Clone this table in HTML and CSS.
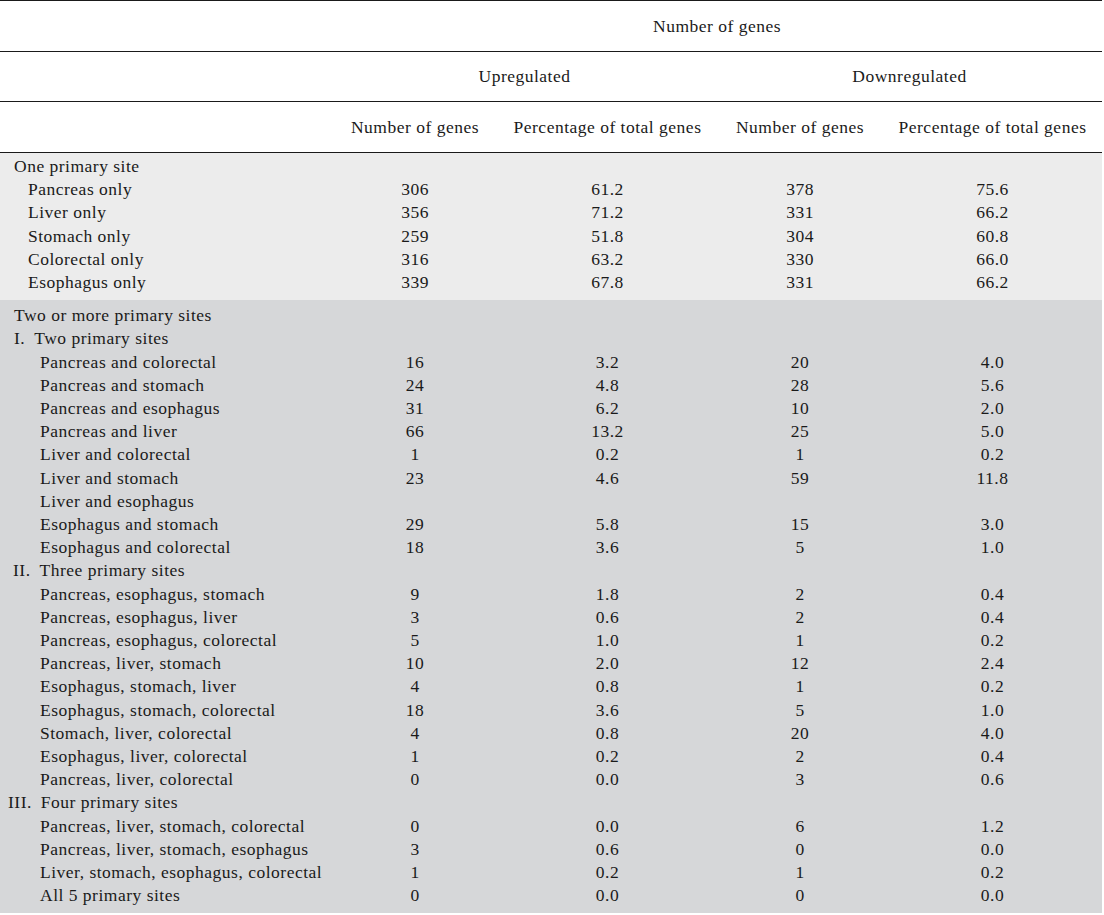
FILE: index.html
```html
<!DOCTYPE html>
<html lang="en">
<head>
<meta charset="utf-8">
<title>Number of genes by primary site</title>
<link rel="stylesheet" href="styles.css">
</head>
<body>
<table class="genes">
  <colgroup>
    <col class="c1"><col class="c2"><col class="c3"><col class="c4"><col class="c5">
  </colgroup>
  <thead>
    <tr class="h1"><th></th><th colspan="4">Number of genes</th></tr>
    <tr class="h2"><th></th><th colspan="2">Upregulated</th><th colspan="2">Downregulated</th></tr>
    <tr class="h3"><th></th><th>Number of genes</th><th>Percentage of total genes</th><th>Number of genes</th><th>Percentage of total genes</th></tr>
  </thead>
  <tbody class="band light">
    <tr class="first"><td class="l0">One primary site</td><td></td><td></td><td></td><td></td></tr>
    <tr><td class="l1">Pancreas only</td><td>306</td><td>61.2</td><td>378</td><td>75.6</td></tr>
    <tr><td class="l1">Liver only</td><td>356</td><td>71.2</td><td>331</td><td>66.2</td></tr>
    <tr><td class="l1">Stomach only</td><td>259</td><td>51.8</td><td>304</td><td>60.8</td></tr>
    <tr><td class="l1">Colorectal only</td><td>316</td><td>63.2</td><td>330</td><td>66.0</td></tr>
    <tr class="last"><td class="l1">Esophagus only</td><td>339</td><td>67.8</td><td>331</td><td>66.2</td></tr>
  </tbody>
  <tbody class="band dark">
    <tr class="first"><td class="l0">Two or more primary sites</td><td></td><td></td><td></td><td></td></tr>
    <tr><td class="r1"><span class="num">I.</span>Two primary sites</td><td></td><td></td><td></td><td></td></tr>
    <tr><td class="l2">Pancreas and colorectal</td><td>16</td><td>3.2</td><td>20</td><td>4.0</td></tr>
    <tr><td class="l2">Pancreas and stomach</td><td>24</td><td>4.8</td><td>28</td><td>5.6</td></tr>
    <tr><td class="l2">Pancreas and esophagus</td><td>31</td><td>6.2</td><td>10</td><td>2.0</td></tr>
    <tr><td class="l2">Pancreas and liver</td><td>66</td><td>13.2</td><td>25</td><td>5.0</td></tr>
    <tr><td class="l2">Liver and colorectal</td><td>1</td><td>0.2</td><td>1</td><td>0.2</td></tr>
    <tr><td class="l2">Liver and stomach</td><td>23</td><td>4.6</td><td>59</td><td>11.8</td></tr>
    <tr><td class="l2">Liver and esophagus</td><td></td><td></td><td></td><td></td></tr>
    <tr><td class="l2">Esophagus and stomach</td><td>29</td><td>5.8</td><td>15</td><td>3.0</td></tr>
    <tr><td class="l2">Esophagus and colorectal</td><td>18</td><td>3.6</td><td>5</td><td>1.0</td></tr>
    <tr><td class="r2"><span class="num">II.</span>Three primary sites</td><td></td><td></td><td></td><td></td></tr>
    <tr><td class="l2">Pancreas, esophagus, stomach</td><td>9</td><td>1.8</td><td>2</td><td>0.4</td></tr>
    <tr><td class="l2">Pancreas, esophagus, liver</td><td>3</td><td>0.6</td><td>2</td><td>0.4</td></tr>
    <tr><td class="l2">Pancreas, esophagus, colorectal</td><td>5</td><td>1.0</td><td>1</td><td>0.2</td></tr>
    <tr><td class="l2">Pancreas, liver, stomach</td><td>10</td><td>2.0</td><td>12</td><td>2.4</td></tr>
    <tr><td class="l2">Esophagus, stomach, liver</td><td>4</td><td>0.8</td><td>1</td><td>0.2</td></tr>
    <tr><td class="l2">Esophagus, stomach, colorectal</td><td>18</td><td>3.6</td><td>5</td><td>1.0</td></tr>
    <tr><td class="l2">Stomach, liver, colorectal</td><td>4</td><td>0.8</td><td>20</td><td>4.0</td></tr>
    <tr><td class="l2">Esophagus, liver, colorectal</td><td>1</td><td>0.2</td><td>2</td><td>0.4</td></tr>
    <tr><td class="l2">Pancreas, liver, colorectal</td><td>0</td><td>0.0</td><td>3</td><td>0.6</td></tr>
    <tr><td class="r3"><span class="num">III.</span>Four primary sites</td><td></td><td></td><td></td><td></td></tr>
    <tr><td class="l2">Pancreas, liver, stomach, colorectal</td><td>0</td><td>0.0</td><td>6</td><td>1.2</td></tr>
    <tr><td class="l2">Pancreas, liver, stomach, esophagus</td><td>3</td><td>0.6</td><td>0</td><td>0.0</td></tr>
    <tr><td class="l2">Liver, stomach, esophagus, colorectal</td><td>1</td><td>0.2</td><td>1</td><td>0.2</td></tr>
    <tr class="last"><td class="l2">All 5 primary sites</td><td>0</td><td>0.0</td><td>0</td><td>0.0</td></tr>
  </tbody>
</table>
</body>
</html>
```

FILE: styles.css
```css
html, body {
  margin: 0;
  padding: 0;
  background: #ffffff;
}

body {
  font-family: "Liberation Serif", "DejaVu Serif", serif;
  font-size: 17.5px;
  letter-spacing: 0.5px;
  color: #1a1a1a;
}

.genes {
  width: 1102px;
  border-collapse: collapse;
  table-layout: fixed;
}

.c1 { width: 332px; }
.c2 { width: 166px; }
.c3 { width: 219px; }
.c4 { width: 166px; }
.c5 { width: 219px; }

.genes th {
  font-weight: normal;
  text-align: center;
  padding: 0;
  vertical-align: middle;
  border-top: 1px solid #1a1a1a;
  white-space: nowrap;
}

.h1 th { height: 50px; }
.h2 th { height: 49px; }
.h3 th { height: 50px; border-bottom: 1px solid #1a1a1a; }

.genes td {
  padding: 0;
  height: 23.2px;
  line-height: 23.2px;
  text-align: center;
  white-space: nowrap;
}

.genes td.l0 { text-align: left; padding-left: 14px; }
.genes td.l1 { text-align: left; padding-left: 28px; }
.genes td.l2 { text-align: left; padding-left: 40px; }
.genes td.r1 { text-align: left; padding-left: 14px; }
.genes td.r2 { text-align: left; padding-left: 13px; }
.genes td.r3 { text-align: left; padding-left: 8px; }

.num {
  margin-right: 9px;
}

.light td { background: #ececec; }
.dark td { background: #d6d7d9; }

.light tr.first td { padding-top: 2px; }
.light tr.last td { padding-bottom: 6px; }
.dark tr.first td { padding-top: 4px; }
.dark tr.last td { padding-bottom: 5px; }
```
